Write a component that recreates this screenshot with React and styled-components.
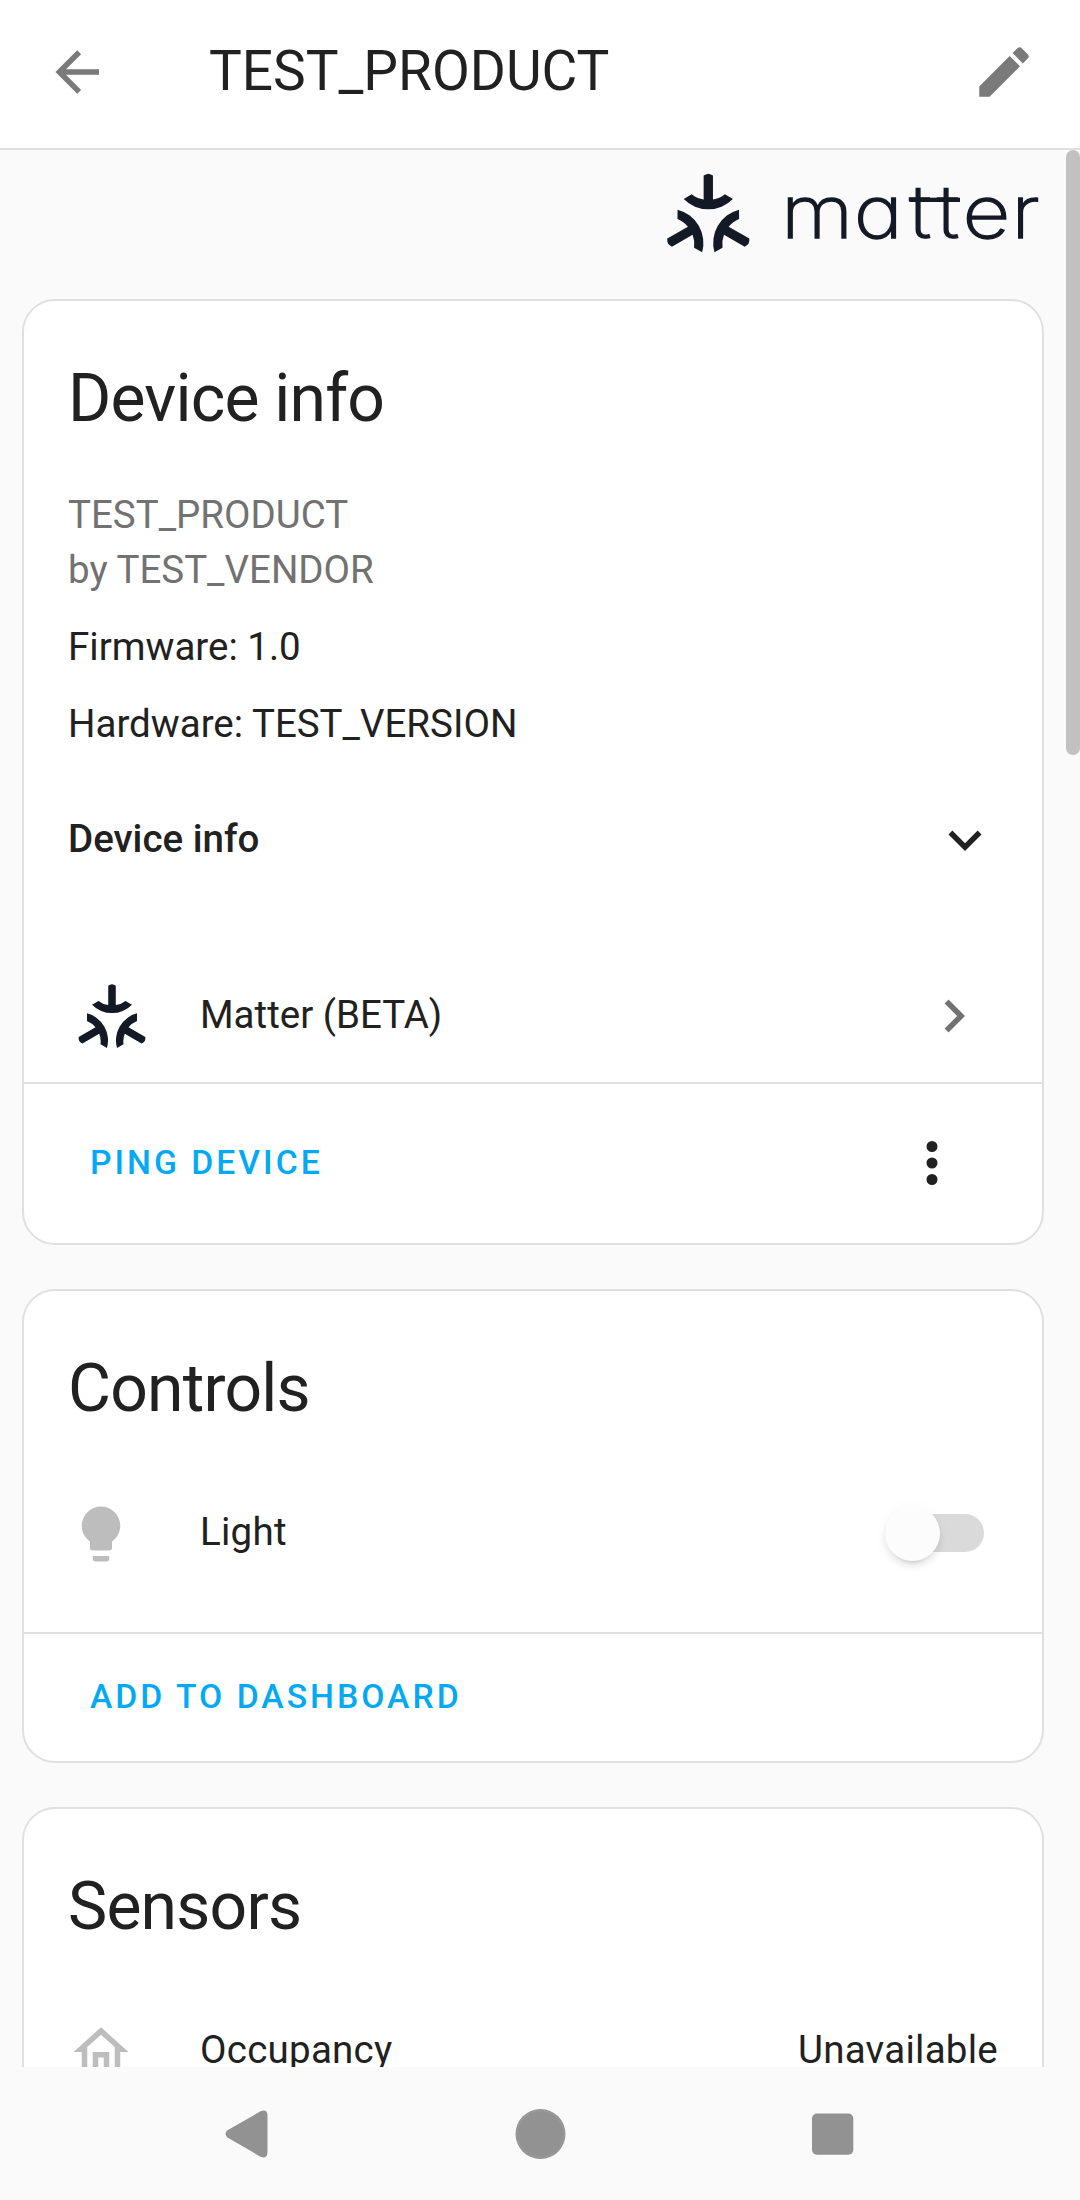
import React from "react";
import styled, { createGlobalStyle } from "styled-components";

const GlobalStyle = createGlobalStyle`
  html, body { margin: 0; background: #fafafa; }
  * { box-sizing: border-box; }
  body { font-family: Roboto, "Liberation Sans", sans-serif; color: #212121; }
`;

const Screen = styled.div`
  width: 1080px;
  height: 2200px;
  display: flex;
  flex-direction: column;
  overflow: hidden;
  background: #fafafa;
`;

const Toolbar = styled.header`
  flex: none;
  height: 150px;
  padding: 0 43px 4px 44px;
  display: flex;
  align-items: center;
  gap: 99px;
  background: #fff;
  border-bottom: 2px solid #e0e0e0;
`;

const Title = styled.h1`
  flex: 1;
  margin: 0;
  padding-bottom: 2px;
  font-size: 55px;
  font-weight: 400;
  line-height: 66px;
`;

const Icon = styled.svg`
  flex: none;
  display: block;
  width: 66px;
  height: 66px;
  fill: ${(p) => p.$color || "#212121"};
`;

const Viewport = styled.main`
  flex: none;
  height: 1917px;
  display: flex;
  overflow: hidden;
`;

const Content = styled.div`
  flex: 1;
  min-width: 0;
  padding: 0 22px;
`;

const ScrollTrack = styled.div`
  flex: none;
  width: 14px;
`;

const ScrollThumb = styled.div`
  height: 605px;
  border-radius: 7px;
  background: #c1c1c1;
`;

const LogoRow = styled.div`
  height: 149px;
  padding: 16px 4px 0 0;
  display: flex;
  justify-content: flex-end;
`;

const Logo = styled.svg`
  display: block;
  width: 380px;
  height: 96px;
  fill: #141926;
`;

const Wordmark = styled.text`
  font-family: Inter, "Liberation Sans", sans-serif;
  font-size: 73.5px;
  font-weight: 200;
  font-feature-settings: "cv11" 1;
  stroke: #141926;
  stroke-width: 1.3px;
`;

const Card = styled.section`
  margin-bottom: 44px;
  border: 2px solid #e0e0e0;
  border-radius: 33px;
  background: #fff;
`;

const CardTitle = styled.h2`
  margin: 0;
  height: 186px;
  padding: 9px 44px 0;
  font-size: 66px;
  font-weight: 400;
  line-height: 177px;
  letter-spacing: -0.012em;
`;

const Details = styled.div`
  padding: 0 44px;
  display: flex;
  flex-direction: column;
  gap: 22px;
  font-size: 38.5px;
  line-height: 55px;
`;

const Model = styled.div`
  color: #727272;
`;

const Expander = styled.div`
  height: 132px;
  margin-top: 22px;
  padding: 0 44px 2px;
  display: flex;
  align-items: center;
  justify-content: space-between;
  font-size: 38.5px;
  font-weight: 500;
`;

const ExpanderIcon = styled(Icon)`
  margin-top: 3px;
`;

const IntegrationRow = styled.div`
  height: 132px;
  margin-top: 45px;
  padding: 0 55px 0 49px;
  display: flex;
  align-items: center;
  font-size: 38.5px;
`;

const IntegrationMark = styled.svg`
  flex: none;
  width: 78px;
  height: 78px;
  margin: 11px 49px 0 0;
  fill: #141926;
`;

const RowLabel = styled.span`
  flex: 1;
  padding-bottom: 3px;
  line-height: 55px;
`;

const EntityRow = styled.div`
  height: 114px;
  padding: 0 ${(p) => p.$end || 58}px 0 44px;
  display: flex;
  align-items: center;
  gap: 66px;
  font-size: 38.5px;
  letter-spacing: 0.25px;
`;

const EntityName = styled(RowLabel)`
  padding-bottom: 5px;
`;

const StateText = styled.span`
  padding-bottom: 5px;
  line-height: 55px;
`;

const Track = styled.div`
  width: 99px;
  height: 38px;
  margin-bottom: 2px;
  display: flex;
  align-items: center;
  border-radius: 19px;
  background: #dadada;
`;

const Thumb = styled.div`
  flex: none;
  width: 55px;
  height: 55px;
  border-radius: 50%;
  background: #fcfcfc;
  box-shadow: 0 8px 3px -6px rgba(0, 0, 0, 0.09), 0 5px 6px rgba(0, 0, 0, 0.07),
    0 3px 14px rgba(0, 0, 0, 0.05);
`;

const Actions = styled.footer`
  height: ${(p) => p.$height}px;
  margin-top: ${(p) => p.$gap || 0}px;
  padding: 0 77px 0 66px;
  display: flex;
  align-items: center;
  justify-content: space-between;
  border-top: 2px solid #e0e0e0;
`;

const MenuIcon = styled(Icon)`
  margin-bottom: 2px;
`;

const ActionButton = styled.button`
  border: 0;
  padding: 0 0 1px;
  background: none;
  color: #03a9f4;
  font-family: inherit;
  font-size: 33.7px;
  font-weight: 500;
  line-height: 50px;
  letter-spacing: 0.0893em;
  text-transform: uppercase;
`;

const NavBar = styled.nav`
  flex: 1;
  padding: 1px 101px 0 101px;
  display: grid;
  grid-template-columns: repeat(3, 1fr);
  align-items: center;
  justify-items: center;
  background: #fafafa;
`;

const NavIcon = styled.svg`
  display: block;
  width: 54px;
  height: 54px;
  fill: #929292;
`;

const paths = {
  back: "M20,11V13H8L13.5,18.5L12.08,19.92L4.16,12L12.08,4.08L13.5,5.5L8,11H20Z",
  pencil:
    "M20.71,7.04C21.1,6.65 21.1,6 20.71,5.63L18.37,3.29C18,2.9 17.35,2.9 16.96,3.29L15.12,5.12L18.87,8.87M3,17.25V21H6.75L17.81,9.93L14.06,6.18L3,17.25Z",
  down: "M7.41,8.58L12,13.17L16.59,8.58L18,10L12,16L6,10L7.41,8.58Z",
  right: "M8.59,16.58L13.17,12L8.59,7.41L10,6L16,12L10,18L8.59,16.58Z",
  dots: "M12,16A2,2 0 0,1 14,18A2,2 0 0,1 12,20A2,2 0 0,1 10,18A2,2 0 0,1 12,16M12,10A2,2 0 0,1 14,12A2,2 0 0,1 12,14A2,2 0 0,1 10,12A2,2 0 0,1 12,10M12,4A2,2 0 0,1 14,6A2,2 0 0,1 12,8A2,2 0 0,1 10,6A2,2 0 0,1 12,4Z",
  bulb: "M12,2A7,7 0 0,0 5,9C5,11.38 6.19,13.47 8,14.74V17A1,1 0 0,0 9,18H15A1,1 0 0,0 16,17V14.74C17.81,13.47 19,11.38 19,9A7,7 0 0,0 12,2M9,21A1,1 0 0,0 10,22H14A1,1 0 0,0 15,21V20H9V21Z",
  home: "M12 5.69L17 10.19V18H15V12H9V18H7V10.19L12 5.69M12 3L2 12H5V20H11V14H13V20H19V12H22L12 3Z",
};

function MdiIcon({ name, color, as: Component = Icon }) {
  return (
    <Component viewBox="0 0 24 24" $color={color} aria-hidden="true">
      <path d={paths[name]} />
    </Component>
  );
}

const arm =
  "M-4.65-44.7Q-2.5-46.2 0-46.6Q2.5-46.2 4.65-44.7V-20.8A25.2 25.2 0 0 0 16.6-26L24.6-21.3A34.5 34.5 0 0 1-24.6-21.3L-16.6-26A25.2 25.2 0 0 0-4.65-20.8Z";

function MatterArms() {
  return [0, 120, 240].map((angle) => (
    <path key={angle} d={arm} transform={`rotate(${angle})`} />
  ));
}

export default function App() {
  return (
    <>
      <GlobalStyle />
      <Screen>
        <Toolbar>
          <MdiIcon name="back" color="#7a7a7a" />
          <Title>TEST_PRODUCT</Title>
          <MdiIcon name="pencil" color="#7a7a7a" />
        </Toolbar>

        <Viewport>
          <Content>
            <LogoRow>
              <Logo viewBox="660 166 380 96" role="img" aria-label="matter">
                <g transform="translate(708.3 220.3)">
                  <MatterArms />
                </g>
                <Wordmark
                  x="691.2 755.5 804.4 829.3 851.8 895"
                  y="238.4"
                  transform="scale(1.13 1)"
                >
                  matter
                </Wordmark>
                <rect x="909.7" y="197.7" width="50.3" height="4.3" />
              </Logo>
            </LogoRow>

            <Card>
              <CardTitle>Device info</CardTitle>
              <Details>
                <Model>
                  TEST_PRODUCT
                  <br />
                  by TEST_VENDOR
                </Model>
                <div>Firmware: 1.0</div>
                <div>Hardware: TEST_VERSION</div>
              </Details>
              <Expander>
                <span>Device info</span>
                <MdiIcon name="down" as={ExpanderIcon} />
              </Expander>
              <IntegrationRow>
                <IntegrationMark viewBox="-48 -48 96 96" aria-hidden="true">
                  <MatterArms />
                </IntegrationMark>
                <RowLabel>Matter (BETA)</RowLabel>
                <MdiIcon name="right" color="#727272" />
              </IntegrationRow>
              <Actions $height={161}>
                <ActionButton>Ping device</ActionButton>
                <MdiIcon name="dots" as={MenuIcon} />
              </Actions>
            </Card>

            <Card>
              <CardTitle>Controls</CardTitle>
              <EntityRow>
                <MdiIcon name="bulb" color="#bdbdbd" />
                <EntityName>Light</EntityName>
                <Track>
                  <Thumb />
                </Track>
              </EntityRow>
              <Actions $height={129} $gap={41}>
                <ActionButton>Add to dashboard</ActionButton>
              </Actions>
            </Card>

            <Card>
              <CardTitle>Sensors</CardTitle>
              <EntityRow $end={44}>
                <MdiIcon name="home" color="#bdbdbd" />
                <EntityName>Occupancy</EntityName>
                <StateText>Unavailable</StateText>
              </EntityRow>
            </Card>
          </Content>
          <ScrollTrack>
            <ScrollThumb />
          </ScrollTrack>
        </Viewport>

        <NavBar>
          <NavIcon viewBox="0 0 54 54">
            <path d="M7.5 23.3L40.5 4.3Q47.5 1.5 47.5 9V45Q47.5 52.5 40.5 49.7L7.5 30.5Q3.5 27 7.5 23.3Z" />
          </NavIcon>
          <NavIcon viewBox="0 0 54 54">
            <circle cx="27.5" cy="27" r="25" />
            <circle cx="27.5" cy="27" r="23.4" fill="none" stroke="#a6a6a6" strokeWidth="0.6" />
          </NavIcon>
          <NavIcon viewBox="0 0 54 54">
            <rect x="6" y="6.5" width="41.3" height="41.3" rx="5" />
          </NavIcon>
        </NavBar>
      </Screen>
    </>
  );
}
